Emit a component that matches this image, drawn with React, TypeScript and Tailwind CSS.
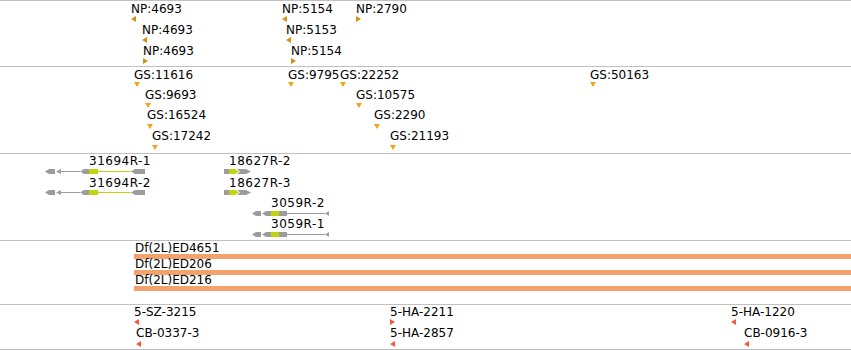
import React from "react";

type Dir = "left" | "right" | "down";
type Mark = { x: number; cap: number; tri: number; dir: Dir; label: string };

const npMarks: Mark[] = [
	{ x: 131, cap: 5, tri: 16, dir: "left", label: "NP:4693" },
	{ x: 142, cap: 26, tri: 37, dir: "left", label: "NP:4693" },
	{ x: 143, cap: 47, tri: 58, dir: "right", label: "NP:4693" },
	{ x: 282, cap: 5, tri: 16, dir: "left", label: "NP:5154" },
	{ x: 286, cap: 26, tri: 37, dir: "left", label: "NP:5153" },
	{ x: 291, cap: 47, tri: 58, dir: "right", label: "NP:5154" },
	{ x: 356, cap: 5, tri: 16, dir: "right", label: "NP:2790" },
];

const gsMarks: Mark[] = [
	{ x: 134, cap: 71, tri: 82, dir: "down", label: "GS:11616" },
	{ x: 145, cap: 91, tri: 103, dir: "down", label: "GS:9693" },
	{ x: 147, cap: 111, tri: 124, dir: "down", label: "GS:16524" },
	{ x: 152, cap: 132, tri: 145, dir: "down", label: "GS:17242" },
	{ x: 288, cap: 71, tri: 82, dir: "down", label: "GS:9795" },
	{ x: 340, cap: 71, tri: 82, dir: "down", label: "GS:22252" },
	{ x: 356, cap: 91, tri: 103, dir: "down", label: "GS:10575" },
	{ x: 374, cap: 111, tri: 124, dir: "down", label: "GS:2290" },
	{ x: 390, cap: 132, tri: 145, dir: "down", label: "GS:21193" },
	{ x: 590, cap: 71, tri: 82, dir: "down", label: "GS:50163" },
];

const probeMarks: Mark[] = [
	{ x: 134, cap: 308, tri: 319, dir: "left", label: "5-SZ-3215" },
	{ x: 136, cap: 329, tri: 341, dir: "left", label: "CB-0337-3" },
	{ x: 390, cap: 308, tri: 319, dir: "right", label: "5-HA-2211" },
	{ x: 390, cap: 329, tri: 341, dir: "left", label: "5-HA-2857" },
	{ x: 731, cap: 308, tri: 319, dir: "left", label: "5-HA-1220" },
	{ x: 744, cap: 329, tri: 341, dir: "left", label: "CB-0916-3" },
];

const geneLabels = [
	{ x: 89, cap: 157, label: "31694R-1" },
	{ x: 89, cap: 179, label: "31694R-2" },
	{ x: 229, cap: 157, label: "18627R-2" },
	{ x: 229, cap: 179, label: "18627R-3" },
	{ x: 271, cap: 199, label: "3059R-2" },
	{ x: 271, cap: 220, label: "3059R-1" },
];

const deficiencies = [
	{ cap: 244, bar: 254, label: "Df(2L)ED4651" },
	{ cap: 260, bar: 270, label: "Df(2L)ED206" },
	{ cap: 276, bar: 286, label: "Df(2L)ED216" },
];

const GREY = "#9c9c9c";
const LIME = "#c3d40c";

function Triangle({ dir, color, w, h }: { dir: Dir; color: string; w: number; h: number }) {
	const pts =
		dir === "left"
			? `${w},0 0,${h / 2} ${w},${h}`
			: dir === "right"
			? `0,0 ${w},${h / 2} 0,${h}`
			: `0,0 ${w},0 ${w / 2},${h}`;
	return (
		<svg width={w} height={h} className="block">
			<polygon points={pts} fill={color} />
		</svg>
	);
}

function Label({
	x,
	cap,
	offset,
	wide,
	children,
}: {
	x: number;
	cap: number;
	offset: number;
	wide?: boolean;
	children: React.ReactNode;
}) {
	return (
		<div
			className={`absolute whitespace-nowrap text-[12px] leading-[12px] text-black ${wide ? "tracking-[0.5px]" : ""}`}
			style={{ left: x, top: cap - 2 - offset }}
		>
			{children}
		</div>
	);
}

function Marks({ marks, offset, color }: { marks: Mark[]; offset: number; color: string }) {
	return (
		<>
			{marks.map((m, i) => (
				<React.Fragment key={i}>
					<Label x={m.x} cap={m.cap} offset={offset}>
						{m.label}
					</Label>
					<div className="absolute" style={{ left: m.x, top: m.tri - offset }}>
						{m.dir === "down" ? (
							<Triangle dir="down" color={color} w={6} h={5} />
						) : (
							<Triangle dir={m.dir} color={color} w={5} h={6} />
						)}
					</div>
				</React.Fragment>
			))}
		</>
	);
}

// gene models drawn in page coordinates, the svg viewBox shifts them into the track
function GeneModels() {
	const big = (y: number) => {
		const c = y + 2.5;
		const b = y + 5;
		return (
			<g key={`a${y}`}>
				<polygon points={`45,${c} 49,${y} 55,${y} 55,${b} 49,${b}`} fill={GREY} />
				<polygon points={`56,${c} 61,${y} 61,${b}`} fill={GREY} />
				<line x1={61} x2={80} y1={c} y2={c} stroke={GREY} strokeWidth={1} />
				<polygon points={`80,${c} 84,${y} 89,${y} 89,${b} 84,${b}`} fill={GREY} />
				<rect x={89} y={y} width={9} height={5} fill={LIME} />
				<line x1={98} x2={131} y1={c} y2={c} stroke={LIME} strokeWidth={1} />
				<polygon points={`131,${c} 135,${y} 145,${y} 145,${b} 135,${b}`} fill={GREY} />
			</g>
		);
	};
	const small = (y: number) => {
		const c = y + 2.5;
		const b = y + 5;
		return (
			<g key={`b${y}`}>
				<rect x={224} y={y} width={5} height={5} fill={GREY} />
				<polygon points={`237,${y} 246,${y} 251,${c} 246,${b} 237,${b} 240,${c}`} fill={GREY} />
				<polygon points={`229,${y} 235,${y} 239,${c} 235,${b} 229,${b}`} fill={LIME} />
			</g>
		);
	};
	const third = (y: number) => {
		const c = y + 2.5;
		const b = y + 5;
		return (
			<g key={`c${y}`}>
				<polygon points={`252,${c} 256,${y} 261,${y} 261,${b} 256,${b}`} fill={GREY} />
				<polygon points={`262,${c} 266,${y} 271,${y} 271,${b} 266,${b}`} fill={GREY} />
				<rect x={271} y={y} width={8} height={5} fill={LIME} />
				<rect x={279} y={y} width={8} height={5} fill={GREY} />
				<line x1={287} x2={325} y1={c} y2={c} stroke={GREY} strokeWidth={1} />
				<polygon points={`325,${c} 329,${y} 329,${b}`} fill={GREY} />
			</g>
		);
	};
	return (
		<svg className="absolute left-0 top-0" width={851} height={86} viewBox="0 154 851 86">
			{big(169)}
			{big(190)}
			{small(169)}
			{small(190)}
			{third(211)}
			{third(232)}
		</svg>
	);
}

export default function App() {
	return (
		<div className="w-[851px] h-[350px] overflow-hidden bg-white font-['DejaVu_Sans',sans-serif] flex flex-col">
			{/* NP track */}
			<div className="relative h-[66px] shrink-0 border-t border-[#c0c0c0]">
				<Marks marks={npMarks} offset={1} color="#cd9410" />
			</div>

			{/* GS track */}
			<div className="relative h-[87px] shrink-0 border-t border-[#c0c0c0]">
				<Marks marks={gsMarks} offset={67} color="#f3a41f" />
			</div>

			{/* gene models */}
			<div className="relative h-[87px] shrink-0 border-t border-[#c0c0c0]">
				<GeneModels />
				{geneLabels.map((g, i) => (
					<Label key={i} x={g.x} cap={g.cap} offset={154} wide>
						{g.label}
					</Label>
				))}
			</div>

			{/* deficiencies */}
			<div className="relative h-[64px] shrink-0 border-t border-[#c0c0c0]">
				{deficiencies.map((d, i) => (
					<React.Fragment key={i}>
						<Label x={135} cap={d.cap} offset={241}>
							{d.label}
						</Label>
						<div className="absolute left-[134px] right-0 h-[5px] bg-[#f3a26e]" style={{ top: d.bar - 241 }} />
					</React.Fragment>
				))}
			</div>

			{/* probes */}
			<div className="relative h-[45px] shrink-0 border-t border-[#c0c0c0]">
				<Marks marks={probeMarks} offset={305} color="#f25a3a" />
			</div>
			<div className="h-[1px] shrink-0 bg-[#c0c0c0]" />
		</div>
	);
}
